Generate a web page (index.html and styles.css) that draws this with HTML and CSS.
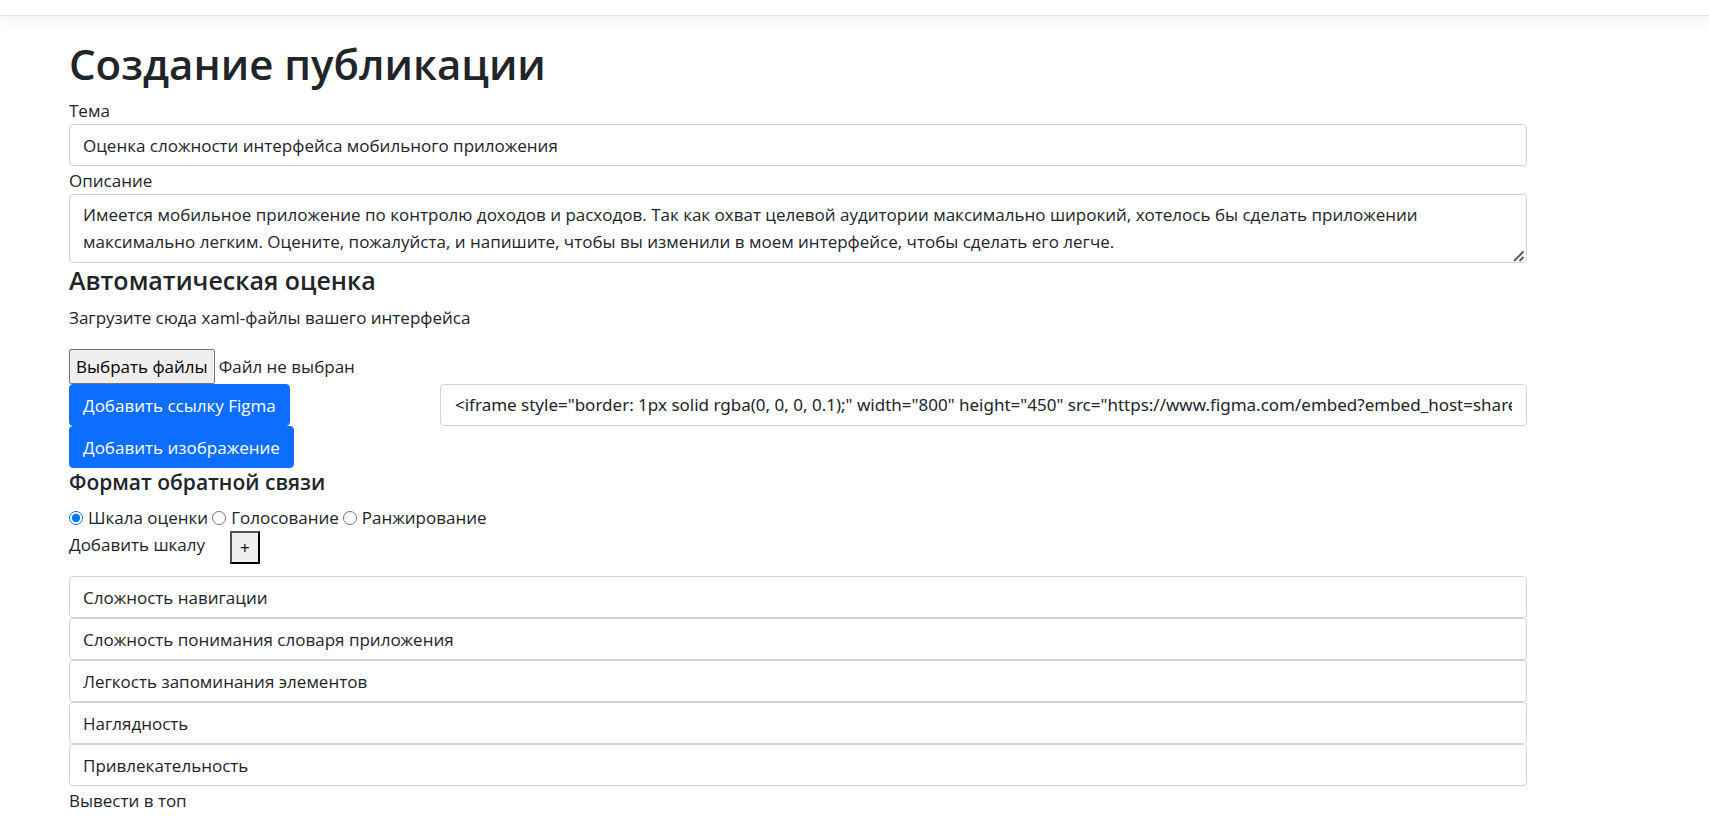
FILE: index.html
```html
<!DOCTYPE html>
<html lang="ru">
<head>
<meta charset="utf-8">
<meta name="viewport" content="width=device-width, initial-scale=1">
<title>Создание публикации</title>
<link rel="stylesheet" href="styles.css">
</head>
<body>
<header class="navbar"></header>
<main class="page">
  <h1 class="title">Создание публикации</h1>
  <form class="form">
    <label class="label" for="topic">Тема</label>
    <input class="control" id="topic" type="text" value="Оценка сложности интерфейса мобильного приложения">
    <label class="label" for="description">Описание</label>
    <div class="area">
      <textarea class="control control-area" id="description" rows="2">Имеется мобильное приложение по контролю доходов и расходов. Так как охват целевой аудитории максимально широкий, хотелось бы сделать приложении максимально легким. Оцените, пожалуйста, и напишите, чтобы вы изменили в моем интерфейсе, чтобы сделать его легче.</textarea>
      <svg class="grip" width="12" height="12" viewBox="0 0 12 12" aria-hidden="true"><path d="M1 11 10.500 1.500M6.500 11 10.500 7" fill="none" stroke="#555" stroke-width="1.800"/></svg>
    </div>

    <h4 class="section">Автоматическая оценка</h4>
    <p class="hint">Загрузите сюда xaml-файлы вашего интерфейса</p>
    <div class="file">
      <input class="file-input" id="files" type="file" multiple>
      <label class="file-button" for="files">Выбрать файлы</label>
      <span class="file-name">Файл не выбран</span>
    </div>
    <div class="row">
      <div class="col-button"><button class="btn" type="button">Добавить ссылку Figma</button></div>
      <div class="col-field"><input class="control control-code" type="text" aria-label="Ссылка Figma" value="&lt;iframe style=&quot;border: 1px solid rgba(0, 0, 0, 0.1);&quot; width=&quot;800&quot; height=&quot;450&quot; src=&quot;https://www.figma.com/embed?embed_host=share&quot;&gt;&lt;/iframe&gt;"></div>
    </div>
    <button class="btn btn-image" type="button">Добавить изображение</button>

    <h5 class="subsection">Формат обратной связи</h5>
    <div class="radios">
      <input class="radio" type="radio" name="format" id="scale" checked><label for="scale">Шкала оценки</label>
      <input class="radio" type="radio" name="format" id="vote"><label for="vote">Голосование</label>
      <input class="radio" type="radio" name="format" id="rank"><label for="rank">Ранжирование</label>
    </div>
    <div class="add">
      <span class="add-text">Добавить шкалу</span>
      <button class="add-button" type="button" aria-label="Добавить шкалу">+</button>
    </div>
    <div class="scales">
      <input class="control" type="text" aria-label="Шкала 1" value="Сложность навигации">
      <input class="control" type="text" aria-label="Шкала 2" value="Сложность понимания словаря приложения">
      <input class="control" type="text" aria-label="Шкала 3" value="Легкость запоминания элементов">
      <input class="control" type="text" aria-label="Шкала 4" value="Наглядность">
      <input class="control" type="text" aria-label="Шкала 5" value="Привлекательность">
    </div>
    <span class="label">Вывести в топ</span>
  </form>
</main>
</body>
</html>
```
FILE: styles.css
```css
* { box-sizing: border-box; }

body {
  margin: 0;
  background: #fff;
  color: #212529;
  font-family: "Segoe UI", "Open Sans", "Noto Sans", sans-serif;
  font-size: 17px;
  line-height: 27px;
  overflow: hidden;
}

button, input, textarea { font: inherit; color: inherit; margin: 0; }

.navbar {
  height: 16px;
  border-bottom: 1px solid #dee2e6;
  box-shadow: 0 5px 14px rgba(0, 0, 0, 0.06);
}

.page { padding: 21px 182px 0 69px; }

.title {
  margin: 0 0 6px;
  font-size: 42px;
  line-height: 53px;
  font-weight: 600;
}

.form { display: flex; flex-direction: column; align-items: stretch; }

.label { display: block; margin-top: 1px; }

.control {
  display: block;
  width: 100%;
  padding: 7px 13px 6px;
  border: 1px solid #ced4da;
  border-radius: 4px;
  background: #fff;
  outline: 0;
}

.control-code {
  padding: 6px 14px 7px;
  font-family: "Segoe UI", "Noto Sans", sans-serif;
}

.area { position: relative; }
.control-area { padding: 6px 13px 7px; resize: none; overflow: hidden; }

.grip {
  position: absolute;
  right: 2px;
  bottom: 1px;
  pointer-events: none;
}

.section {
  margin: 1px 0 8px;
  font-size: 25px;
  line-height: 32px;
  font-weight: 600;
}

.hint { margin: 0 0 18px; }

.file { display: flex; align-items: center; gap: 4px; }

.file-input {
  position: absolute;
  width: 1px;
  height: 1px;
  opacity: 0;
}

.file-button {
  padding: 3px 6px;
  border: 1px solid #767676;
  border-radius: 2px;
  background: #efefef;
  color: #000;
}

.row { display: flex; margin: 0 -13px; }
.col-button { width: 25%; padding: 0 13px; }
.col-field { width: 75%; padding: 0 13px; }

.btn {
  padding: 7px 13px 6px;
  border: 1px solid #0d6efd;
  border-radius: 4px;
  background: #0d6efd;
  color: #fff;
}

.btn-image { align-self: flex-start; }

.subsection {
  margin: 1px 0 8px;
  font-size: 21px;
  line-height: 27px;
  font-weight: 600;
}

.radios { display: flex; align-items: center; }
.radio { width: 14px; height: 14px; margin-right: 5px; }
.radios label { margin-right: 4px; }

.add { display: flex; align-items: flex-start; gap: 25px; margin-bottom: 12px; }

.add-button {
  padding: 1px 8px;
  border: 2px outset #000;
  background: #efefef;
  color: #000;
}
```
